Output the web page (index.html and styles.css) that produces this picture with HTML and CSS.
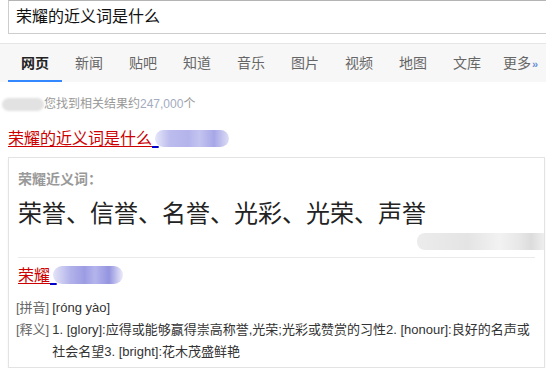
FILE: index.html
```html
<!DOCTYPE html>
<html lang="zh-CN">
<head>
<meta charset="utf-8">
<title>荣耀的近义词是什么</title>
<link rel="stylesheet" href="styles.css">
</head>
<body>
<div class="search"><span class="query">荣耀的近义词是什么</span></div>
<nav class="nav">
  <span class="tab active">网页</span>
  <span class="tab">新闻</span>
  <span class="tab">贴吧</span>
  <span class="tab">知道</span>
  <span class="tab">音乐</span>
  <span class="tab">图片</span>
  <span class="tab">视频</span>
  <span class="tab">地图</span>
  <span class="tab">文库</span>
  <span class="tab">更多<span class="more">»</span></span>
</nav>
<div class="count"><span class="blob-gray"></span>您找到相关结果约<span class="num">247,000</span>个</div>
<div class="title"><a class="link"><span class="red">荣耀的近义词是什么</span><span class="blue">&nbsp;&nbsp;</span></a><span class="blob-blue"></span></div>
<div class="card">
  <div class="label">荣耀近义词：</div>
  <div class="syn">荣誉、信誉、名誉、光彩、光荣、声誉</div>
  <div class="src"><span class="blob-src"></span></div>
  <div class="sep"></div>
  <div class="word"><a class="link"><span class="red">荣耀</span><span class="blue">&nbsp;&nbsp;</span></a><span class="blob-blue small"></span></div>
  <div class="row pinyin"><span class="tag">[拼音]</span><span class="val">[róng yào]</span></div>
  <div class="row def"><span class="tag">[释义]</span><span class="val">1. [glory]:应得或能够赢得崇高称誉,光荣;光彩或赞赏的习性2. [honour]:良好的名声或社会名望3. [bright]:花木茂盛鲜艳</span></div>
</div>
</body>
</html>
```
FILE: styles.css
```css
html, body {
  margin: 0;
  padding: 0;
  background: #fff;
  overflow: hidden;
  font-family: "Liberation Sans", "Noto Sans CJK SC", sans-serif;
  color: #333;
}
.search {
  margin-left: 8px;
  height: 32px;
  border: 1px solid #cdcdcd;
  border-top-color: #b4b4b4;
  border-right: none;
  display: flex;
  align-items: center;
  padding-left: 7px;
}
.query {
  font-size: 16px;
  line-height: 20px;
  color: #111;
}
.nav {
  margin-top: 9px;
  border-top: 1px solid #e6e6e6;
  background: #f7f7f7;
  height: 38px;
  display: flex;
  padding-left: 8px;
  overflow: hidden;
}
.tab {
  width: 54px;
  flex: none;
  text-align: center;
  font-size: 14px;
  line-height: 38px;
  color: #666;
  white-space: nowrap;
}
.tab:last-child {
  width: 44px;
  text-align: left;
  padding-left: 9px;
  box-sizing: border-box;
}
.tab.active {
  color: #222;
  font-weight: bold;
  box-shadow: inset 0 -2px 0 #3388ff;
}
.more {
  color: #6b8fd6;
  font-size: 11px;
  font-weight: bold;
  margin-left: 1px;
}
.count {
  margin-top: 14px;
  padding-left: 2px;
  font-size: 12px;
  line-height: 16px;
  color: #999;
  display: flex;
  align-items: center;
}
.num {
  color: #a3abc0;
}
.blob-gray {
  display: inline-block;
  width: 42px;
  height: 13px;
  border-radius: 7px;
  background: #e2e2e2;
  filter: blur(1px);
}
.title {
  margin-top: 15px;
  padding-left: 8px;
  height: 24px;
  display: flex;
  align-items: center;
}
.link {
  font-size: 16px;
  line-height: 20px;
  text-decoration: none;
}
.red {
  color: #c00;
  text-decoration: underline;
  text-underline-offset: 2px;
}
.blue {
  color: #00c;
  text-decoration: underline;
  text-decoration-thickness: 2px;
  text-underline-offset: 2px;
  font-size: 12px;
}
.blob-blue {
  display: inline-block;
  width: 74px;
  height: 17px;
  border-radius: 9px;
  background: linear-gradient(90deg, #e6e6fa 0%, #bcbcee 20%, #b4b4ec 45%, #c4c4f0 60%, #a7a7e8 80%, #ddddf6 100%);
  filter: blur(0.6px);
  margin-left: -4px;
  margin-top: -2px;
}
.blob-blue.small {
  width: 70px;
  height: 18px;
  background: linear-gradient(90deg, #e4e4f8 0%, #b2b2ea 25%, #9c9ce4 45%, #b4b4ec 60%, #9494e0 80%, #ececfa 100%);
}
.card {
  margin: 6px 1px 0 8px;
  border: 1px solid #e3e3e3;
  box-shadow: 0 2px 2px rgba(0, 0, 0, 0.06);
  padding: 0 9px 4px 9px;
}
.label {
  margin-top: 12px;
  font-size: 14px;
  line-height: 18px;
  font-weight: bold;
  color: #999;
}
.syn {
  margin-top: 11px;
  font-size: 24px;
  line-height: 30px;
  color: #222;
}
.src {
  display: flex;
  justify-content: flex-end;
  margin-top: 4px;
  margin-right: -9px;
}
.blob-src {
  display: inline-block;
  width: 127px;
  height: 17px;
  border-radius: 8px 0 0 8px;
  background: linear-gradient(90deg, #ececec 0%, #e4e4e4 40%, #f2f2f2 65%, #e8e8e8 80%, #dcdcdc 90%, #eeeeee 100%);
  filter: blur(0.5px);
}
.sep {
  margin-top: 7px;
  height: 1px;
  background: #eaeaea;
}
.word {
  margin-top: 9px;
  height: 18px;
  display: flex;
  align-items: center;
}
.row {
  display: flex;
  font-size: 13px;
  line-height: 22px;
  margin-left: -2px;
}
.pinyin {
  margin-top: 12px;
}
.tag {
  color: #666;
  flex: none;
  margin-right: 3px;
}
.val {
  color: #333;
}
```
